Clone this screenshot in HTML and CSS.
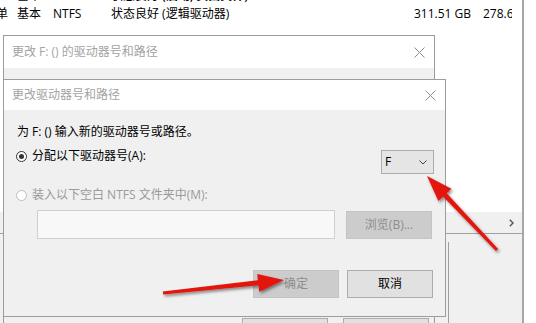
FILE: index.html
```html
<!DOCTYPE html>
<html lang="zh-CN">
<head>
<meta charset="utf-8">
<title>更改驱动器号和路径</title>
<link rel="stylesheet" href="styles.css">
</head>
<body>
<div class="screen">
  <div class="main">
    <div class="list">
      <div class="row row-prev">
        <span class="c0"></span><span class="c1">基本</span><span class="c2"></span><span class="c3 bold">状态良好 (启动, 页面文件)</span>
      </div>
      <div class="row">
        <span class="c0">单</span><span class="c1">基本</span><span class="c2">NTFS</span><span class="c3">状态良好 (逻辑驱动器)</span><span class="c4">311.51 GB</span><span class="c5">278.65 GB</span>
      </div>
      <div class="hscroll">
        <svg class="hs-arrow" width="5" height="8" viewBox="0 0 5 8"><path d="M0.8 0.8 L4 4 L0.8 7.2" fill="none" stroke="#555" stroke-width="1.4"/></svg>
      </div>
    </div>
    <div class="lower"><div class="diskbox"></div></div>
  </div>

  <div class="win outer">
    <div class="titlebar tb-outer">
      <span class="title">更改 F: () 的驱动器号和路径</span>
      <svg class="close" width="11" height="11" viewBox="0 0 11 11"><path d="M0.5 0.5 L10.5 10.5 M10.5 0.5 L0.5 10.5" stroke="#8f8f8f" stroke-width="1" fill="none"/></svg>
    </div>
    <div class="outer-body">
      <div class="btn-row btn-row-outer">
        <div class="btn">确定</div>
        <div class="btn">取消</div>
      </div>
    </div>
  </div>

  <div class="win inner">
    <div class="titlebar tb-inner">
      <span class="title">更改驱动器号和路径</span>
      <svg class="close" width="11" height="11" viewBox="0 0 11 11"><path d="M0.5 0.5 L10.5 10.5 M10.5 0.5 L0.5 10.5" stroke="#8f8f8f" stroke-width="1" fill="none"/></svg>
    </div>
    <div class="inner-body">
      <div class="prompt">为 F: () 输入新的驱动器号或路径。</div>
      <div class="opt-row">
        <div class="opt"><span class="radio on"></span><span>分配以下驱动器号(A):</span></div>
        <div class="combo"><span>F</span>
          <svg width="8" height="5" viewBox="0 0 8 5"><path d="M0.5 0.5 L4 4 L7.5 0.5" fill="none" stroke="#444" stroke-width="1"/></svg>
        </div>
      </div>
      <div class="opt opt-2 disabled"><span class="radio off"></span><span>装入以下空白 NTFS 文件夹中(M):</span></div>
      <div class="path-row">
        <div class="field"></div>
        <div class="btn btn-disabled btn-browse">浏览(B)...</div>
      </div>
      <div class="btn-row btn-row-inner">
        <div class="btn btn-disabled">确定</div>
        <div class="btn">取消</div>
      </div>
    </div>
  </div>

  <svg class="arrows" width="536" height="323" viewBox="0 0 536 323">
    <defs>
      <filter id="sh" x="-20%" y="-20%" width="140%" height="140%">
        <feDropShadow dx="1.5" dy="2" stdDeviation="1.6" flood-color="#000" flood-opacity="0.45"/>
      </filter>
    </defs>
    <g fill="#e3140f" filter="url(#sh)">
      <path d="M498.1 249 L446.7 193.2 L451.4 188.7 L427 176 L438.4 201.1 L443.1 196.6 L495.9 251 Z"/>
      <path d="M162.8 291.5 L257.9 280.3 L257.2 273.9 L284 280 L259.2 291.7 L258.5 285.3 L163.2 294.5 Z"/>
    </g>
  </svg>
</div>
</body>
</html>
```

FILE: styles.css
```css
* { box-sizing: border-box; }
html, body { margin: 0; padding: 0; }
body {
  font-family: "Open Sans", "Noto Sans CJK SC", sans-serif;
  font-size: 12px;
  line-height: 16px;
  color: #000;
  background: #fff;
}
.screen {
  position: relative;
  width: 536px;
  height: 323px;
  overflow: hidden;
  background: #fff;
}
.main {
  width: 524px;
  height: 323px;
  display: flex;
  flex-direction: column;
  border-right: 2px solid #a6a6a6;
}
.list {
  flex: none;
  height: 234px;
  display: flex;
  flex-direction: column;
  border-bottom: 1px solid #a0a0a0;
  background: #fff;
}
.row {
  display: flex;
  white-space: nowrap;
  overflow: hidden;
  height: 16px;
  flex: none;
}
.row-prev { margin-top: -12px; margin-bottom: 2px; }
.bold { font-weight: 600; }
.c0 { margin-left: -4px; width: 21px; flex: none; }
.c1 { width: 36px; flex: none; }
.c2 { width: 58px; flex: none; }
.c3 { width: 303px; flex: none; }
.c4 { width: 69px; flex: none; }
.c5 { width: 29px; overflow: hidden; flex: none; }
.hscroll {
  margin-top: auto;
  height: 21px;
  background: #f0f0f0;
  display: flex;
  align-items: center;
  justify-content: flex-end;
  padding-right: 8px;
}
.lower {
  flex: 1;
  min-height: 0;
  background: #f0f0f0;
  padding-top: 8px;
  overflow: hidden;
}
.diskbox {
  margin-left: 448px;
  height: 120px;
  border-left: 1px solid #a0a0a0;
}

.win {
  position: absolute;
  border: 1px solid #9c9c9c;
  background: #f0f0f0;
  display: flex;
  flex-direction: column;
}
.outer { left: 3px; top: 35px; width: 432px; height: 300px; }
.inner { left: 3px; top: 79px; width: 443px; height: 238px; }
.titlebar {
  background: #fff;
  display: flex;
  align-items: center;
  justify-content: space-between;
  padding-left: 8px;
  padding-right: 9px;
  flex: none;
}
.tb-outer { height: 32px; }
.tb-inner { height: 30px; }
.title { color: #a3a3a3; }
.close { display: block; }

.outer-body { padding-top: 250px; }
.btn-row { display: flex; justify-content: flex-end; }
.btn-row-outer { gap: 15px; padding-right: 5px; }

.btn {
  width: 86px;
  height: 28px;
  border: 1px solid #adadad;
  background: #e1e1e1;
  display: flex;
  align-items: center;
  justify-content: center;
  flex: none;
}
.btn-disabled {
  background: #cccccc;
  border-color: #c4c4c4;
  color: #8d8d8d;
}

.inner-body {
  padding: 14px 12px 0 13px;
  display: flex;
  flex-direction: column;
}
.prompt { height: 16px; margin-bottom: 8px; }
.opt-row { display: flex; align-items: flex-start; }
.opt { display: flex; align-items: center; height: 16px; }
.opt-2 { margin-top: 13px; }
.disabled { color: #9a9a9a; }
.radio {
  width: 11px;
  height: 11px;
  border: 1px solid #333;
  border-radius: 50%;
  margin-left: -1px;
  margin-right: 5px;
  display: flex;
  align-items: center;
  justify-content: center;
  flex: none;
  background: #fff;
}
.radio.on::after {
  content: "";
  width: 5px;
  height: 5px;
  border-radius: 50%;
  background: #333;
}
.radio.off { border-color: #bdbdbd; }
.combo {
  margin-left: auto;
  margin-top: 2px;
  margin-right: -1px;
  width: 53px;
  height: 24px;
  border: 1px solid #adadad;
  background: #e5e5e5;
  display: flex;
  align-items: center;
  justify-content: space-between;
  padding: 0 6px 0 3px;
}
.combo svg { display: block; }
.path-row { display: flex; align-items: flex-start; margin-top: 7px; }
.field {
  margin-left: 20px;
  width: 298px;
  height: 29px;
  border: 1px solid #cfcfcf;
  background: #f8f8f8;
}
.btn-browse { margin-left: 11px; margin-top: 1px; }
.btn-row-inner { gap: 8px; margin-top: 31px; }

.arrows {
  position: absolute;
  left: 0;
  top: 0;
  pointer-events: none;
}
```
